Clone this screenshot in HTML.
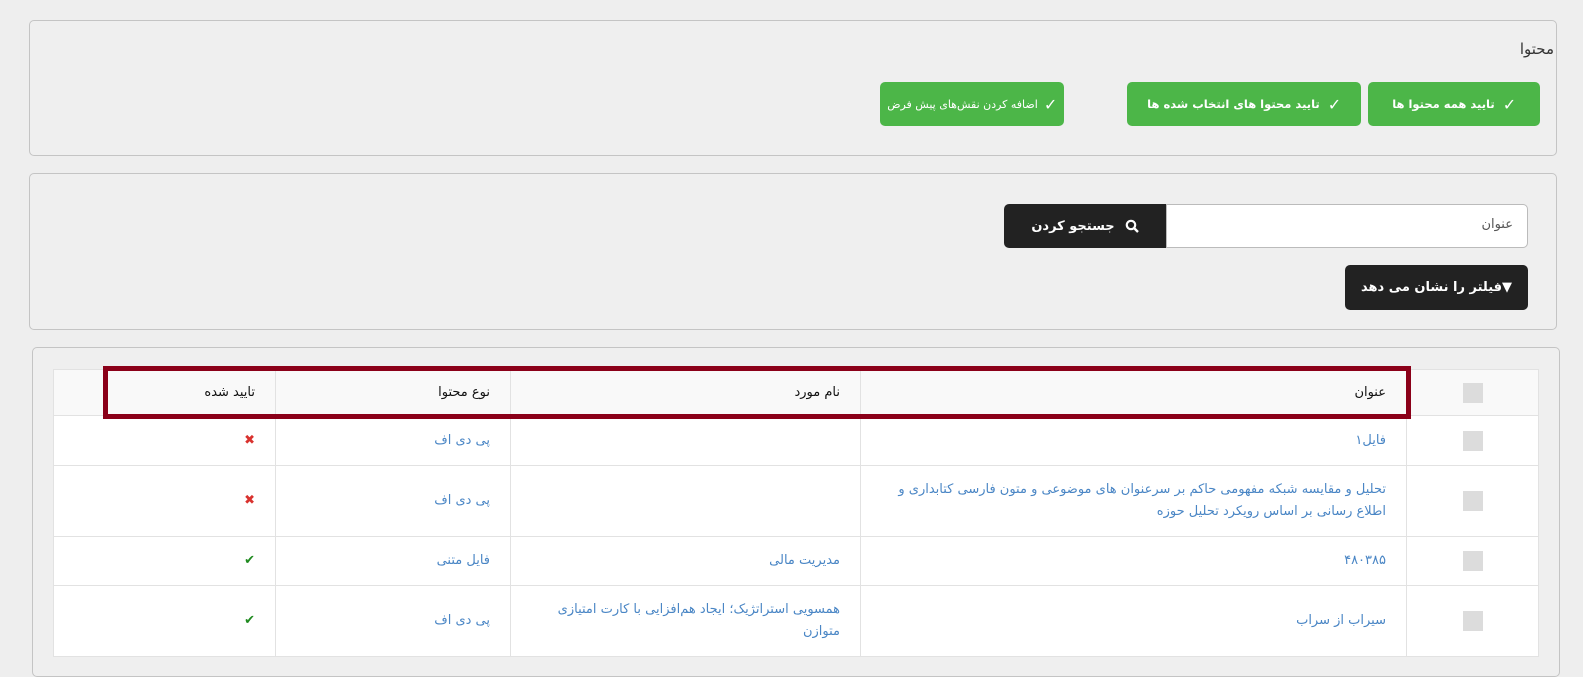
<!DOCTYPE html>
<html dir="rtl"><head><meta charset="utf-8"><style>
*{box-sizing:border-box;margin:0;padding:0}
body{width:1583px;height:656px;overflow:hidden;background:#eeeeee;font-family:"DejaVu Sans","Liberation Sans",sans-serif;font-size:12px;color:#222;position:relative}
.panel{position:absolute;border:1px solid #c4c4c4;border-radius:5px;background:rgba(240,240,240,.6)}
.btn{position:absolute;height:44px;border-radius:5px;background:#4cb648;color:#fff;font-weight:bold;font-size:11.5px;display:flex;align-items:center;justify-content:center;gap:8px;white-space:nowrap;letter-spacing:-0.3px;overflow:hidden}
.dark{position:absolute;background:#222;color:#fff;font-weight:bold;font-size:13px;display:flex;align-items:center;justify-content:center;gap:10px}
table{position:absolute;left:53px;top:369px;width:1485px;border-collapse:collapse;background:#fff;table-layout:fixed}
td,th{border:1px solid #e2e2e2;text-align:right;padding:0 20px 0 20px;font-weight:normal;font-size:13px;color:#4a86c5;line-height:22px}
th{background:#f9f9f9;color:#111;height:46px}
.cb{width:20px;height:20px;background:#dcdcdc;margin:auto}
.x{color:#d9322e;font-weight:bold}.ok{color:#1f8a1f;font-weight:bold}
</style></head><body>
<div class="panel" style="left:29px;top:20px;width:1528px;height:136px"></div>
<div style="position:absolute;right:29px;top:40px;font-size:15px;color:#333">محتوا</div>
<div class="btn" style="left:1368px;width:172px;top:82px"><span style="font-size:16px">✓</span> تایید همه محتوا ها</div>
<div class="btn" style="left:1127px;width:234px;top:82px"><span style="font-size:16px">✓</span> تایید محتوا های انتخاب شده ها</div>
<div class="btn" style="left:880px;width:184px;top:82px;font-size:11px;font-weight:normal;gap:6px;letter-spacing:-0.4px"><span style="font-size:16px">✓</span> اضافه کردن نقش‌های پیش فرض</div>

<div class="panel" style="left:29px;top:173px;width:1528px;height:157px"></div>
<div style="position:absolute;left:1166px;top:204px;width:362px;height:44px;background:#fff;border:1px solid #bbb;border-radius:0 5px 5px 0;color:#555;font-size:13px;padding:12px 14px 0 0">عنوان</div>
<div class="dark" style="left:1004px;top:204px;width:162px;height:44px;border-radius:5px 0 0 5px"><svg width="14" height="14" viewBox="0 0 14 14"><circle cx="6" cy="6" r="4.2" fill="none" stroke="#fff" stroke-width="2.2"/><path d="M9 9l4 4" stroke="#fff" stroke-width="2.4"/></svg>جستجو کردن</div>
<div class="dark" style="left:1345px;top:265px;width:183px;height:45px;border-radius:5px">▼فیلتر را نشان می دهد</div>

<div class="panel" style="left:32px;top:347px;width:1528px;height:330px"></div>
<table>
<colgroup><col style="width:132px"><col style="width:546px"><col style="width:350px"><col style="width:235px"><col style="width:222px"></colgroup>
<tr><th><div class="cb"></div></th><th>عنوان</th><th>نام مورد</th><th>نوع محتوا</th><th>تایید شده</th></tr>
<tr style="height:50px"><td><div class="cb"></div></td><td>فایل۱</td><td></td><td>پی دی اف</td><td><span class="x">✖</span></td></tr>
<tr style="height:71px"><td><div class="cb"></div></td><td>تحلیل و مقایسه شبکه مفهومی حاکم بر سرعنوان های موضوعی و متون فارسی کتابداری و اطلاع رسانی بر اساس رویکرد تحلیل حوزه</td><td></td><td>پی دی اف</td><td><span class="x">✖</span></td></tr>
<tr style="height:49px"><td><div class="cb"></div></td><td>۴۸۰۳۸۵</td><td>مدیریت مالی</td><td>فایل متنی</td><td><span class="ok">✔</span></td></tr>
<tr style="height:71px"><td><div class="cb"></div></td><td>سیراب از سراب</td><td>همسویی استراتژیک؛ ایجاد هم‌افزایی با کارت امتیازی متوازن</td><td>پی دی اف</td><td><span class="ok">✔</span></td></tr>
</table>
<div style="position:absolute;left:103px;top:366px;width:1308px;height:53px;border:5px solid #8b0019"></div>
</body></html>
